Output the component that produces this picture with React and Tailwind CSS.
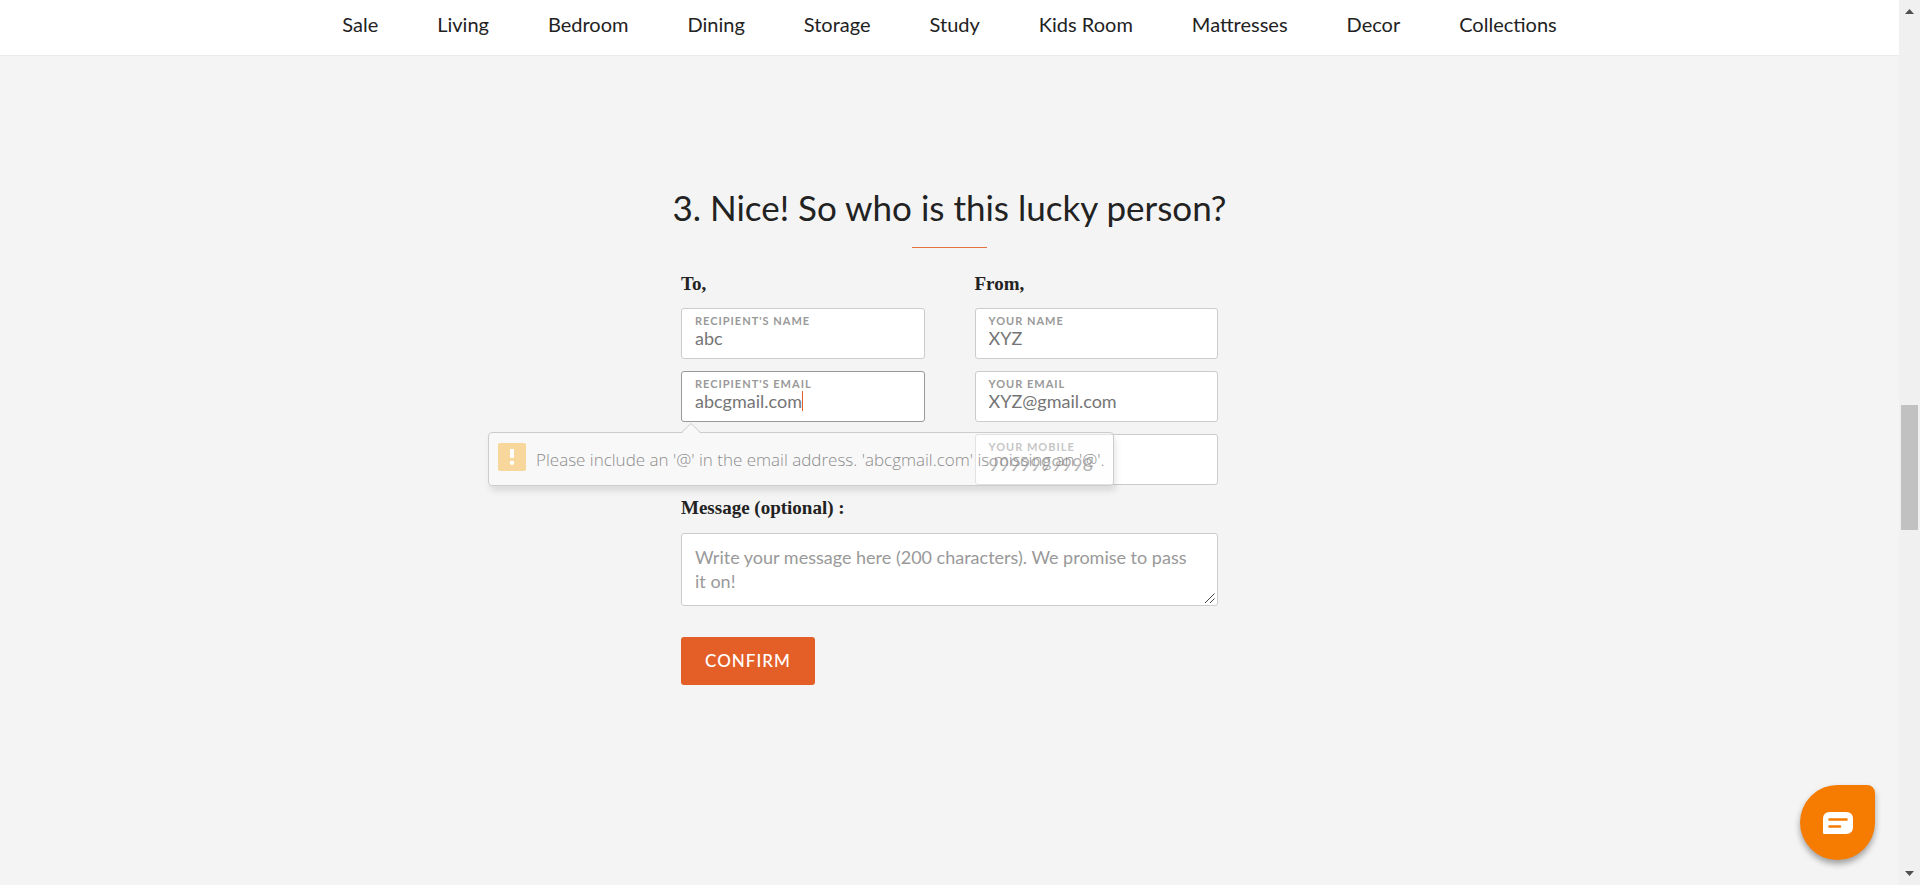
import React from "react";

const NAV_ITEMS = [
  "Sale",
  "Living",
  "Bedroom",
  "Dining",
  "Storage",
  "Study",
  "Kids Room",
  "Mattresses",
  "Decor",
  "Collections",
];

function Field({ id, label, type = "text", value, active = false, children }) {
  return (
    <div
      className={`relative flex h-[51px] flex-col rounded-[3px] border bg-white px-[13px] pt-[4px] ${
        active ? "border-[#999]" : "border-[#ccc]"
      }`}
    >
      <label
        htmlFor={id}
        className="text-[11px] font-bold uppercase leading-[15px] tracking-[1px] text-[#999]"
      >
        {label}
      </label>
      <div className="flex">
        <input
          id={id}
          type={type}
          defaultValue={value}
          className={`h-[20px] min-w-0 bg-transparent text-[18px] leading-[20px] text-[#757575] caret-[#e45f28] outline-none ${
            active ? "border-r border-[#e45f28] [field-sizing:content]" : "w-full"
          }`}
        />
      </div>
      {children}
    </div>
  );
}

function ValidationHint() {
  return (
    <div
      role="alert"
      className="absolute -left-[194px] top-[60px] z-10 flex h-[54px] w-max items-start rounded-[4px] border border-[#ccc] bg-[#fcfcfc]/45 pl-[9px] pr-[8px] pt-[10px] shadow-[2px_5px_6px_rgba(0,0,0,0.1)]"
    >
      <svg
        className="absolute -top-[10px] left-[192px]"
        width="20"
        height="11"
        viewBox="0 0 20 11"
        aria-hidden="true"
      >
        <path d="M0 11 L10 0.5 L20 11 Z" fill="#f8f8f8" />
        <path d="M0 10 L10 0.5 L20 10" fill="none" stroke="#ccc" />
      </svg>
      <svg width="28" height="28" viewBox="0 0 28 28" aria-hidden="true">
        <rect width="28" height="28" rx="2" fill="#f8d79d" />
        <rect x="12" y="6" width="4" height="9" fill="#fff" />
        <circle cx="14" cy="19.800" r="2.200" fill="#fff" />
      </svg>
      <span className="ml-[10px] mt-[5px] whitespace-nowrap font-['Open_Sans',sans-serif] text-[17px] font-light leading-[24px] text-[#8c8c8c]">
        Please include an '@' in the email address. 'abcgmail.com' is missing an '@'.
      </span>
    </div>
  );
}

function GroupTitle({ children }) {
  return (
    <h3 className="font-['Liberation_Serif',serif] text-[19px] font-bold leading-[24px] text-[#222]">
      {children}
    </h3>
  );
}

function Scrollbar() {
  return (
    <div
      className="sticky top-0 flex h-screen w-[21px] shrink-0 flex-col items-center bg-[#f0f0f0] py-[9px]"
      aria-hidden="true"
    >
      <svg width="9" height="5" viewBox="0 0 9 5">
        <path d="M0 5 L4.500 0 L9 5 Z" fill="#505050" />
      </svg>
      <div className="grow-[391]" />
      <div className="h-[125px] w-[17px] bg-[#c1c1c1]" />
      <div className="grow-[341]" />
      <svg width="9" height="5" viewBox="0 0 9 5">
        <path d="M0 0 L9 0 L4.500 5 Z" fill="#505050" />
      </svg>
    </div>
  );
}

export default function App() {
  return (
    <div className="flex min-h-screen bg-[#f4f4f4] font-['Lato',sans-serif] text-[#222]">
      <div className="min-w-0 grow">
        <header className="border-b border-[#ebebeb] bg-white">
          <nav className="flex justify-center gap-[59px] pb-[18px] pt-[11px]">
            {NAV_ITEMS.map((item) => (
              <a key={item} href="#" className="whitespace-nowrap text-[20px] leading-[26px]">
                {item}
              </a>
            ))}
          </nav>
        </header>

        <main className="pt-[128px]">
          <h2 className="text-center text-[35px] leading-[46px]">
            3. Nice! So who is this lucky person?
          </h2>
          <div className="mx-auto mt-[17px] h-px w-[75px] bg-[#e4723f]" />

          <form className="mx-auto mt-[24px] w-[537px]" noValidate>
            <div className="grid grid-cols-2 gap-[50px]">
              <div className="flex flex-col gap-[12px]">
                <GroupTitle>To,</GroupTitle>
                <Field id="to-name" label="Recipient's Name" value="abc" />
                <Field
                  id="to-email"
                  label="Recipient's Email"
                  type="text"
                  value="abcgmail.com"
                  active
                >
                  <ValidationHint />
                </Field>
              </div>
              <div className="flex flex-col gap-[12px]">
                <GroupTitle>From,</GroupTitle>
                <Field id="from-name" label="Your Name" value="XYZ" />
                <Field id="from-email" label="Your Email" type="email" value="XYZ@gmail.com" />
                <Field id="from-mobile" label="Your Mobile" type="tel" value="9999999998" />
              </div>
            </div>

            <label
              htmlFor="message"
              className="mt-[11px] block font-['Liberation_Serif',serif] text-[19px] font-bold leading-[24px]"
            >
              Message (optional) :
            </label>
            <div className="relative mt-[13px]">
              <textarea
                id="message"
                rows={2}
                placeholder="Write your message here (200 characters). We promise to pass it on!"
                className="block h-[73px] w-full resize-y overflow-hidden rounded-[3px] border border-[#ccc] bg-white py-[11px] pl-[13px] pr-[20px] text-[18px] leading-[24px] outline-none placeholder:text-[#999]"
              />
              <svg
                className="pointer-events-none absolute bottom-[2px] right-[2px] bg-white"
                width="12"
                height="12"
                viewBox="0 0 12 12"
                aria-hidden="true"
              >
                <path d="M1 11 L10.500 1.500 M6 11 L10.500 6.500" stroke="#444" fill="none" />
              </svg>
            </div>
            <button
              type="button"
              className="mt-[31px] h-[48px] w-[134px] rounded-[3px] bg-[#e45f28] text-[17px] font-medium tracking-[1px] text-white"
            >
              CONFIRM
            </button>
          </form>
        </main>
      </div>

      <Scrollbar />

      <button
        type="button"
        aria-label="Open chat"
        className="fixed bottom-[25px] right-[45px] flex h-[75px] w-[75px] items-center justify-center rounded-[38px] rounded-tr-[8px] bg-[#f57c00] shadow-[0_4px_6px_rgba(0,0,0,0.35)]"
      >
        <svg width="30" height="22" viewBox="0 0 30 22" aria-hidden="true">
          <path
            d="M7 0 H23 Q30 0 30 7 V15 Q30 22 23 22 H1 Q0 22 0 21 V7 Q0 0 7 0 Z"
            fill="#fff"
          />
          <path
            d="M6.500 7.500 H23.500 M6.500 14.500 H17"
            stroke="#f57c00"
            strokeWidth="2.600"
            strokeLinecap="round"
          />
        </svg>
      </button>
    </div>
  );
}
